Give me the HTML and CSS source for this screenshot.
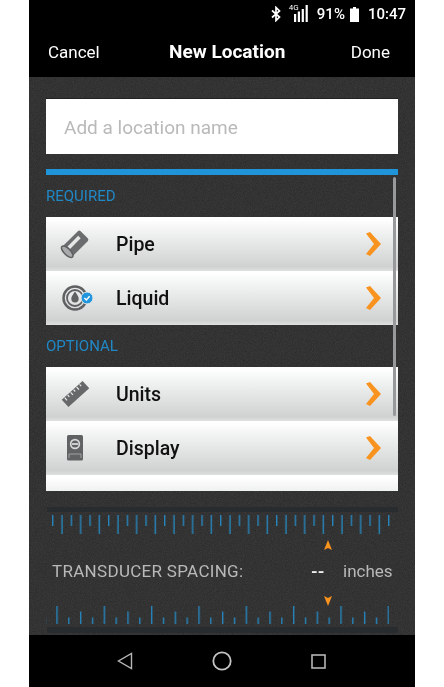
FILE: index.html
```html
<!DOCTYPE html>
<html lang="en">
<head>
<meta charset="utf-8">
<title>New Location</title>
<link rel="stylesheet" href="styles.css">
</head>
<body>
<div class="phone">
  <div class="status">
    <svg class="i-bt" viewBox="0 0 10 16" width="10" height="16"><path d="M1 4.500 8.500 11 5 14.500V1.500L8.500 5 1 11.500" fill="none" stroke="#fff" stroke-width="1.700"/></svg>
    <span class="net"><span class="net-label">4G</span>
      <svg viewBox="0 0 14 17" width="14" height="17"><path d="M0 9h2.200v8H0zM3.800 6.500H6V17H3.800zM7.700 4H9.900v13H7.700zM11.600 0h2.200v17h-2.200z" fill="#fff"/></svg>
    </span>
    <span class="pct">91%</span>
    <svg class="i-batt" viewBox="0 0 9 16" width="9" height="16"><path d="M3 1h3v1.500h3V16H0V2.500h3z" fill="#fff"/></svg>
    <span class="clock">10:47</span>
  </div>
  <header class="bar">
    <span class="bar-btn">Cancel</span>
    <span class="bar-title">New Location</span>
    <span class="bar-btn">Done</span>
  </header>
  <main class="body">
    <svg class="noise" width="100%" height="100%"><filter id="n"><feTurbulence type="fractalNoise" baseFrequency="1.100" numOctaves="2"/><feColorMatrix values="0 0 0 0 0  0 0 0 0 0  0 0 0 0 0  0 0 0 .4 -.08"/></filter><rect width="100%" height="100%" filter="url(#n)"/></svg>
    <div class="field">Add a location name</div>
    <div class="rule"></div>
    <div class="scroll">
      <div class="thumb"></div>
      <h2 class="sec">REQUIRED</h2>
      <div class="list">
        <div class="row">
          <svg class="ic" viewBox="0 0 36 30" width="36" height="30"><g transform="rotate(-45 17 15)"><rect x="5" y="8" width="25" height="14" rx="2" fill="#6a6c6d"/><rect x="10" y="11.500" width="15" height="3.500" fill="#e6e7e7"/><ellipse cx="6" cy="15" rx="3.200" ry="7.500" fill="#a8aaab" stroke="#5e6061" stroke-width="1.500"/></g></svg>
          <span class="label">Pipe</span>
          <svg class="chev" viewBox="0 0 16 24" width="16" height="24"><path d="M1 1.500 5 0l11 12L5 24l-4-2 8-10z" fill="#f7931e"/></svg>
        </div>
        <div class="row">
          <svg class="ic" viewBox="0 0 36 30" width="36" height="30"><circle cx="17" cy="15" r="11.500" fill="none" stroke="#5f6162" stroke-width="2.500"/><circle cx="17" cy="15" r="8" fill="none" stroke="#5f6162" stroke-width="1.800"/><path d="M17 8.500c2 3 3.700 5 3.700 7.300a3.700 3.700 0 0 1-7.400 0c0-2.300 1.700-4.300 3.700-7.300z" fill="#5f6162"/><circle cx="29" cy="15" r="6" fill="#2196dc" stroke="#e8e8e8" stroke-width="1"/><path d="m26.400 15 2 2 3.200-3.700" fill="none" stroke="#fff" stroke-width="1.500"/></svg>
          <span class="label">Liquid</span>
          <svg class="chev" viewBox="0 0 16 24" width="16" height="24"><path d="M1 1.500 5 0l11 12L5 24l-4-2 8-10z" fill="#f7931e"/></svg>
        </div>
      </div>
      <h2 class="sec">OPTIONAL</h2>
      <div class="list list-cut">
        <div class="row">
          <svg class="ic" viewBox="0 0 36 30" width="36" height="30"><g transform="rotate(-42 17.500 15)"><rect x="3.500" y="10" width="28" height="10" fill="#66686a"/><path d="M7 10.500v3.500M11 10.500v2.500M15 10.500v3.500M19 10.500v2.500M23 10.500v3.500M27 10.500v2.500" stroke="#e8e8e8" stroke-width="1.200"/></g></svg>
          <span class="label">Units</span>
          <svg class="chev" viewBox="0 0 16 24" width="16" height="24"><path d="M1 1.500 5 0l11 12L5 24l-4-2 8-10z" fill="#f7931e"/></svg>
        </div>
        <div class="row">
          <svg class="ic" viewBox="0 0 36 30" width="36" height="30"><rect x="9" y="2" width="16" height="25.500" rx="1.500" fill="#606263"/><circle cx="17" cy="11" r="5.200" fill="#d8d9d9"/><circle cx="17" cy="11" r="3.500" fill="#606263"/><path d="M14 10.200h6v1.600h-6z" fill="#e6e6e6"/><path d="M11 25V21h12v4" fill="none" stroke="#b0b2b3" stroke-width=".800"/></svg>
          <span class="label">Display</span>
          <svg class="chev" viewBox="0 0 16 24" width="16" height="24"><path d="M1 1.500 5 0l11 12L5 24l-4-2 8-10z" fill="#f7931e"/></svg>
        </div>
        <div class="row"></div>
      </div>
    </div>
    <div class="gauge">
      <div class="track"></div>
      <svg class="ticks ticks-top" width="352" height="19">
        <defs><pattern id="tp" x="6" width="18.667" height="19" patternUnits="userSpaceOnUse">
          <rect width="1.400" height="11" class="tick"/><rect x="9.333" width="1.400" height="19" class="tick"/>
        </pattern></defs>
        <rect width="345" height="19" fill="url(#tp)"/>
      </svg>
      <svg class="arrow arrow-up" viewBox="0 0 8 10" width="8" height="10"><path d="M4 0l4 10-4-2-4 2z" fill="#f7931e"/></svg>
      <div class="reading">
        <span class="reading-name">TRANSDUCER SPACING:</span>
        <span class="reading-val">--</span>
        <span class="reading-unit">inches</span>
      </div>
      <svg class="arrow arrow-down" viewBox="0 0 8 10" width="8" height="10"><path d="M4 10 8 0 4 2 0 0z" fill="#f7931e"/></svg>
      <svg class="ticks ticks-bottom" width="352" height="18">
        <defs><pattern id="bp" x="10.300" width="47.333" height="18" patternUnits="userSpaceOnUse">
          <rect width="1.400" height="18" class="tick"/><rect x="11.833" y="11.500" width="1.400" height="6.500" class="tick"/><rect x="23.667" y="5.500" width="1.400" height="12.500" class="tick"/><rect x="35.500" y="11.500" width="1.400" height="6.500" class="tick"/>
        </pattern></defs>
        <rect width="343" height="18" fill="url(#bp)"/>
      </svg>
      <div class="track track-end"></div>
    </div>
  </main>
  <nav class="nav">
    <svg viewBox="0 0 16 18" width="16" height="18"><path d="M14.500 1.500v15L1.500 9z" fill="none" stroke="#b5b5b5" stroke-width="1.400"/></svg>
    <svg viewBox="0 0 20 20" width="20" height="20"><circle cx="10" cy="10" r="8.700" fill="none" stroke="#c4c4c4" stroke-width="1.800"/></svg>
    <svg viewBox="0 0 15 15" width="15" height="15"><rect x="1" y="1" width="13" height="13" fill="none" stroke="#b5b5b5" stroke-width="1.600"/></svg>
  </nav>
</div>
</body>
</html>
```
FILE: styles.css
```css
* { box-sizing: border-box; }
html, body { margin: 0; background: #fff; }
body { font-family: Roboto, "Liberation Sans", sans-serif; width: 444px; height: 687px; overflow: hidden; }
.phone { margin-left: 29px; width: 386px; height: 687px; display: flex; flex-direction: column; background: #000; filter: blur(.35px); }

.status { height: 28px; display: flex; align-items: center; justify-content: flex-end; padding: 0 9px 1px 0; color: #fff; }
.i-bt { margin-right: 13px; }
.net { position: relative; display: flex; margin-right: 9px; }
.net-label { position: absolute; left: -5px; top: -2px; font-size: 8px; line-height: 9px; }
.pct { font-size: 15px; font-weight: 500; margin-right: 5px; }
.i-batt { margin-right: 9px; }
.clock { font-size: 15px; font-weight: 500; }

.bar { height: 49px; display: flex; align-items: center; justify-content: space-between; padding: 0 25px 2px 19px; color: #fff; }
.bar-btn { font-size: 17px; }
.bar-title { font-size: 19px; font-weight: 700; margin-left: 4px; }

.body { position: relative; flex: 1; background: #3a3a3a; padding: 21px 17px 0; display: flex; flex-direction: column; }
.noise { position: absolute; inset: 0; }
.field { position: relative; flex: none; height: 56px; background: #fff; border-top: 1px solid #222; display: flex; align-items: center; padding: 1px 0 0 18px; font-size: 19px; color: #b9b9b9; }
.rule { position: relative; flex: none; height: 6px; margin-top: 15px; background: #1f94d8; }

.scroll { position: relative; flex: none; height: 316px; }
.thumb { position: absolute; right: 2px; top: 2px; width: 3px; height: 239px; background: #98999a; border-radius: 2px; z-index: 1; }
.sec { margin: 0; height: 42px; padding-top: 13px; font-size: 15px; line-height: 17px; font-weight: 400; color: #2088c6; }
.list { height: 108px; }
.list-cut { height: 124px; overflow: hidden; }
.row { height: 54px; display: flex; align-items: center; background: linear-gradient(#fff 4%, #f2f3f3 25%, #d0d2d2 92%, #dfe0e0); }
.ic { margin-left: 12px; flex: none; }
.label { margin-left: 22px; font-size: 19.500px; font-weight: 500; color: #111; flex: 1; }
.chev { margin-right: 17px; flex: none; }

.gauge { position: relative; flex: none; margin-top: 16px; display: flex; flex-direction: column; }
.track { height: 5px; margin-left: 1px; background: #282c2e; flex: none; }
.track-end { height: 6px; margin-top: 3px; }
.ticks { display: block; flex: none; }
.tick { fill: #2684bb; }
.ticks-top { margin-top: 3px; }
.arrow { position: absolute; left: 278px; }
.arrow-up { top: 33px; }
.arrow-down { top: 89px; }
.reading { position: relative; display: flex; align-items: baseline; margin-top: 27px; height: 40px; padding-left: 6px; font-size: 17px; color: #b9b9b9; }
.reading-name { letter-spacing: .3px; width: 259px; }
.reading-val { font-weight: 700; color: #eee; width: 32px; }
.ticks-bottom { margin-top: 5px; }

.nav { height: 52px; display: flex; align-items: center; justify-content: center; gap: 79px; padding-right: 2px; }
```
